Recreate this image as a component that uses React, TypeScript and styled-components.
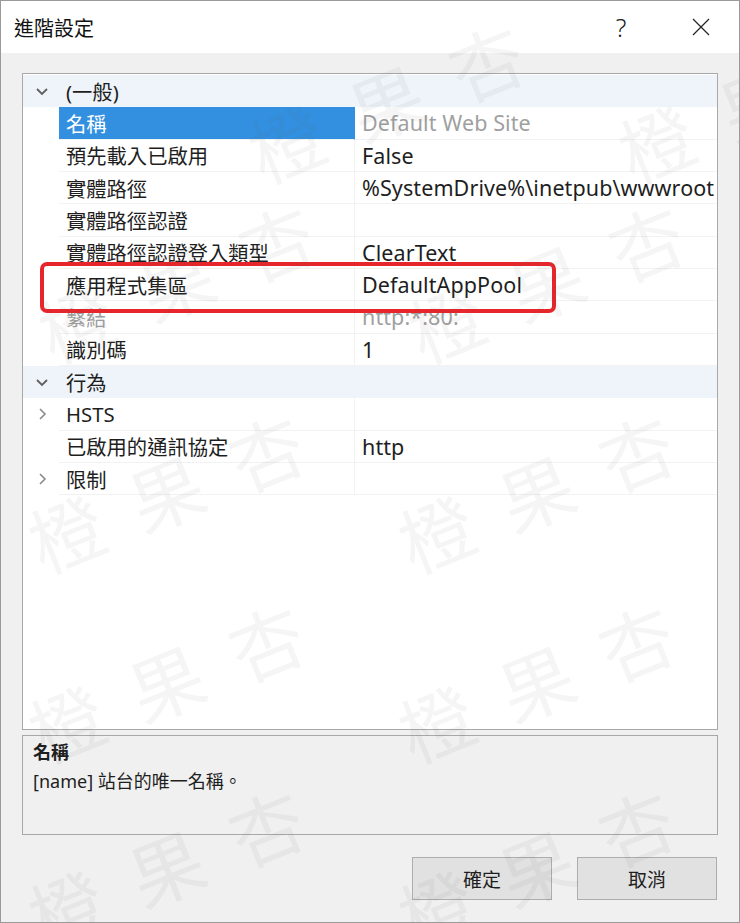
import React from "react";
import styled, { createGlobalStyle } from "styled-components";

const GlobalStyle = createGlobalStyle`
  html, body {
    margin: 0;
    padding: 0;
    background: #ffffff;
  }
  body {
    font-family: "Noto Sans", "Noto Sans CJK TC", sans-serif;
  }
`;

const cjk = `"Noto Sans", "Noto Sans CJK TC", sans-serif`;

const Window = styled.div`
  position: relative;
  width: 740px;
  height: 923px;
  box-sizing: border-box;
  border: 1px solid #9a9a9a;
  background: #f0f0f0;
  display: flex;
  flex-direction: column;
  overflow: hidden;
`;

const TitleBar = styled.div`
  height: 52px;
  background: #ffffff;
  display: flex;
  align-items: center;
  padding-left: 13px;
  font-family: ${cjk};
  font-size: 20px;
  color: #111;
`;

const Title = styled.div`
  flex: 1;
`;

const TitleButton = styled.div<{ $w: number }>`
  width: ${(p) => p.$w}px;
  height: 52px;
  display: flex;
  align-items: center;
  justify-content: center;
  font-size: 25px;
  font-weight: 300;
  color: #222;
`;

const Body = styled.div`
  flex: 1;
  display: flex;
  flex-direction: column;
  padding: 20px 21px 22px 21px;
`;

const Grid = styled.div`
  position: relative;
  height: 657px;
  box-sizing: border-box;
  border: 1px solid #a8a8a8;
  background: #ffffff;
  padding-top: 1px;
  font-family: ${cjk};
  font-size: 20.3px;
`;

const Row = styled.div<{ $category?: boolean }>`
  height: 32.33px;
  display: grid;
  grid-template-columns: 36px 296px 1fr;
  background: ${(p) => (p.$category ? "#eef4f9" : "#ffffff")};
`;

const Gutter = styled.div`
  display: flex;
  align-items: center;
  justify-content: center;
  padding-left: 2px;
`;

const NameCell = styled.div<{ $selected?: boolean; $muted?: boolean; $category?: boolean }>`
  display: flex;
  align-items: center;
  padding-left: 7px;
  white-space: nowrap;
  overflow: hidden;
  color: ${(p) => (p.$selected ? "#ffffff" : p.$muted ? "#a0a0a0" : "#1e1e1e")};
  background: ${(p) => (p.$selected ? "#3390e0" : "transparent")};
  border-bottom: 1px solid ${(p) => (p.$category ? "transparent" : "#f2f2f2")};
  border-right: 1px solid ${(p) => (p.$category || p.$selected ? "transparent" : "#f2f2f2")};
  box-sizing: border-box;
`;

const ValueCell = styled.div<{ $muted?: boolean; $category?: boolean }>`
  display: flex;
  align-items: center;
  padding-left: 7px;
  white-space: nowrap;
  overflow: hidden;
  font-size: 21.5px;
  letter-spacing: 0.1px;
  color: ${(p) => (p.$muted ? "#a0a0a0" : "#1e1e1e")};
  border-bottom: 1px solid ${(p) => (p.$category ? "transparent" : "#f2f2f2")};
  box-sizing: border-box;
`;

const Highlight = styled.div`
  position: absolute;
  left: 17px;
  top: 188px;
  width: 516px;
  height: 51px;
  box-sizing: border-box;
  border: 4px solid #e7262c;
  border-radius: 7px;
  pointer-events: none;
`;

const Description = styled.div`
  margin-top: 5px;
  height: 100px;
  box-sizing: border-box;
  border: 1px solid #a8a8a8;
  background: #f0f0f0;
  padding: 2px 10px;
  font-family: ${cjk};
  color: #1e1e1e;
`;

const DescTitle = styled.div`
  font-size: 18px;
  font-weight: 700;
  line-height: 28px;
`;

const DescText = styled.div`
  font-size: 18px;
  line-height: 30px;
`;

const Buttons = styled.div`
  margin-top: 22px;
  display: flex;
  justify-content: flex-end;
  gap: 25px;
  padding-right: 1px;
`;

const Button = styled.div`
  width: 140px;
  height: 43px;
  box-sizing: border-box;
  border: 1px solid #adadad;
  background: #e1e1e1;
  display: flex;
  align-items: center;
  justify-content: center;
  font-family: ${cjk};
  font-size: 19px;
  color: #1e1e1e;
`;

const WatermarkLayer = styled.div`
  position: absolute;
  inset: 0;
  pointer-events: none;
`;

const Mark = styled.div`
  position: absolute;
  font-family: "Noto Sans CJK TC", sans-serif;
  font-size: 74px;
  letter-spacing: 34px;
  color: rgba(90, 90, 90, 0.06);
  white-space: nowrap;
  transform: rotate(-22deg);
  transform-origin: left center;
`;

function Chevron({ open }: { open: boolean }) {
  return (
    <svg width="14" height="14" viewBox="0 0 14 14">
      {open ? (
        <polyline points="2,5 7,10 12,5" fill="none" stroke="#606060" strokeWidth="1.8" />
      ) : (
        <polyline points="5,2 10,7 5,12" fill="none" stroke="#8a8a8a" strokeWidth="1.6" />
      )}
    </svg>
  );
}

function CloseIcon() {
  return (
    <svg width="18" height="18" viewBox="0 0 18 18">
      <path d="M1 1 L17 17 M17 1 L1 17" stroke="#222" strokeWidth="1.2" fill="none" />
    </svg>
  );
}

interface GridRow {
  name: string;
  value?: string;
  category?: boolean;
  expander?: "open" | "closed";
  selected?: boolean;
  muted?: boolean;
  mutedName?: boolean;
}

const rows: GridRow[] = [
  { name: "(一般)", category: true, expander: "open" },
  { name: "名稱", value: "Default Web Site", selected: true, muted: true },
  { name: "預先載入已啟用", value: "False" },
  { name: "實體路徑", value: "%SystemDrive%\\inetpub\\wwwroot" },
  { name: "實體路徑認證", value: "" },
  { name: "實體路徑認證登入類型", value: "ClearText" },
  { name: "應用程式集區", value: "DefaultAppPool" },
  { name: "繫結", value: "http:*:80:", muted: true, mutedName: true },
  { name: "識別碼", value: "1" },
  { name: "行為", category: true, expander: "open" },
  { name: "HSTS", value: "", expander: "closed" },
  { name: "已啟用的通訊協定", value: "http" },
  { name: "限制", value: "", expander: "closed" },
];

const marks = [
  { x: 250, y: 140 },
  { x: 620, y: 140 },
  { x: 40, y: 320 },
  { x: 410, y: 320 },
  { x: 30, y: 530 },
  { x: 400, y: 530 },
  { x: 30, y: 720 },
  { x: 400, y: 720 },
  { x: 30, y: 905 },
  { x: 400, y: 905 },
];

export default function App() {
  return (
    <>
      <GlobalStyle />
      <Window>
        <TitleBar>
          <Title>進階設定</Title>
          <TitleButton $w={84}>?</TitleButton>
          <TitleButton $w={76}>
            <CloseIcon />
          </TitleButton>
        </TitleBar>
        <Body>
          <Grid>
            {rows.map((r, i) => (
              <Row key={i} $category={r.category}>
                <Gutter>{r.expander && <Chevron open={r.expander === "open"} />}</Gutter>
                <NameCell $selected={r.selected} $muted={r.mutedName} $category={r.category}>
                  {r.name}
                </NameCell>
                <ValueCell $muted={r.muted} $category={r.category}>
                  {r.value}
                </ValueCell>
              </Row>
            ))}
            <Highlight />
          </Grid>
          <Description>
            <DescTitle>名稱</DescTitle>
            <DescText>[name] 站台的唯一名稱。</DescText>
          </Description>
          <Buttons>
            <Button>確定</Button>
            <Button>取消</Button>
          </Buttons>
        </Body>
        <WatermarkLayer>
          {marks.map((m, i) => (
            <Mark key={i} style={{ left: m.x, top: m.y - 40 }}>
              橙果杏
            </Mark>
          ))}
        </WatermarkLayer>
      </Window>
    </>
  );
}
